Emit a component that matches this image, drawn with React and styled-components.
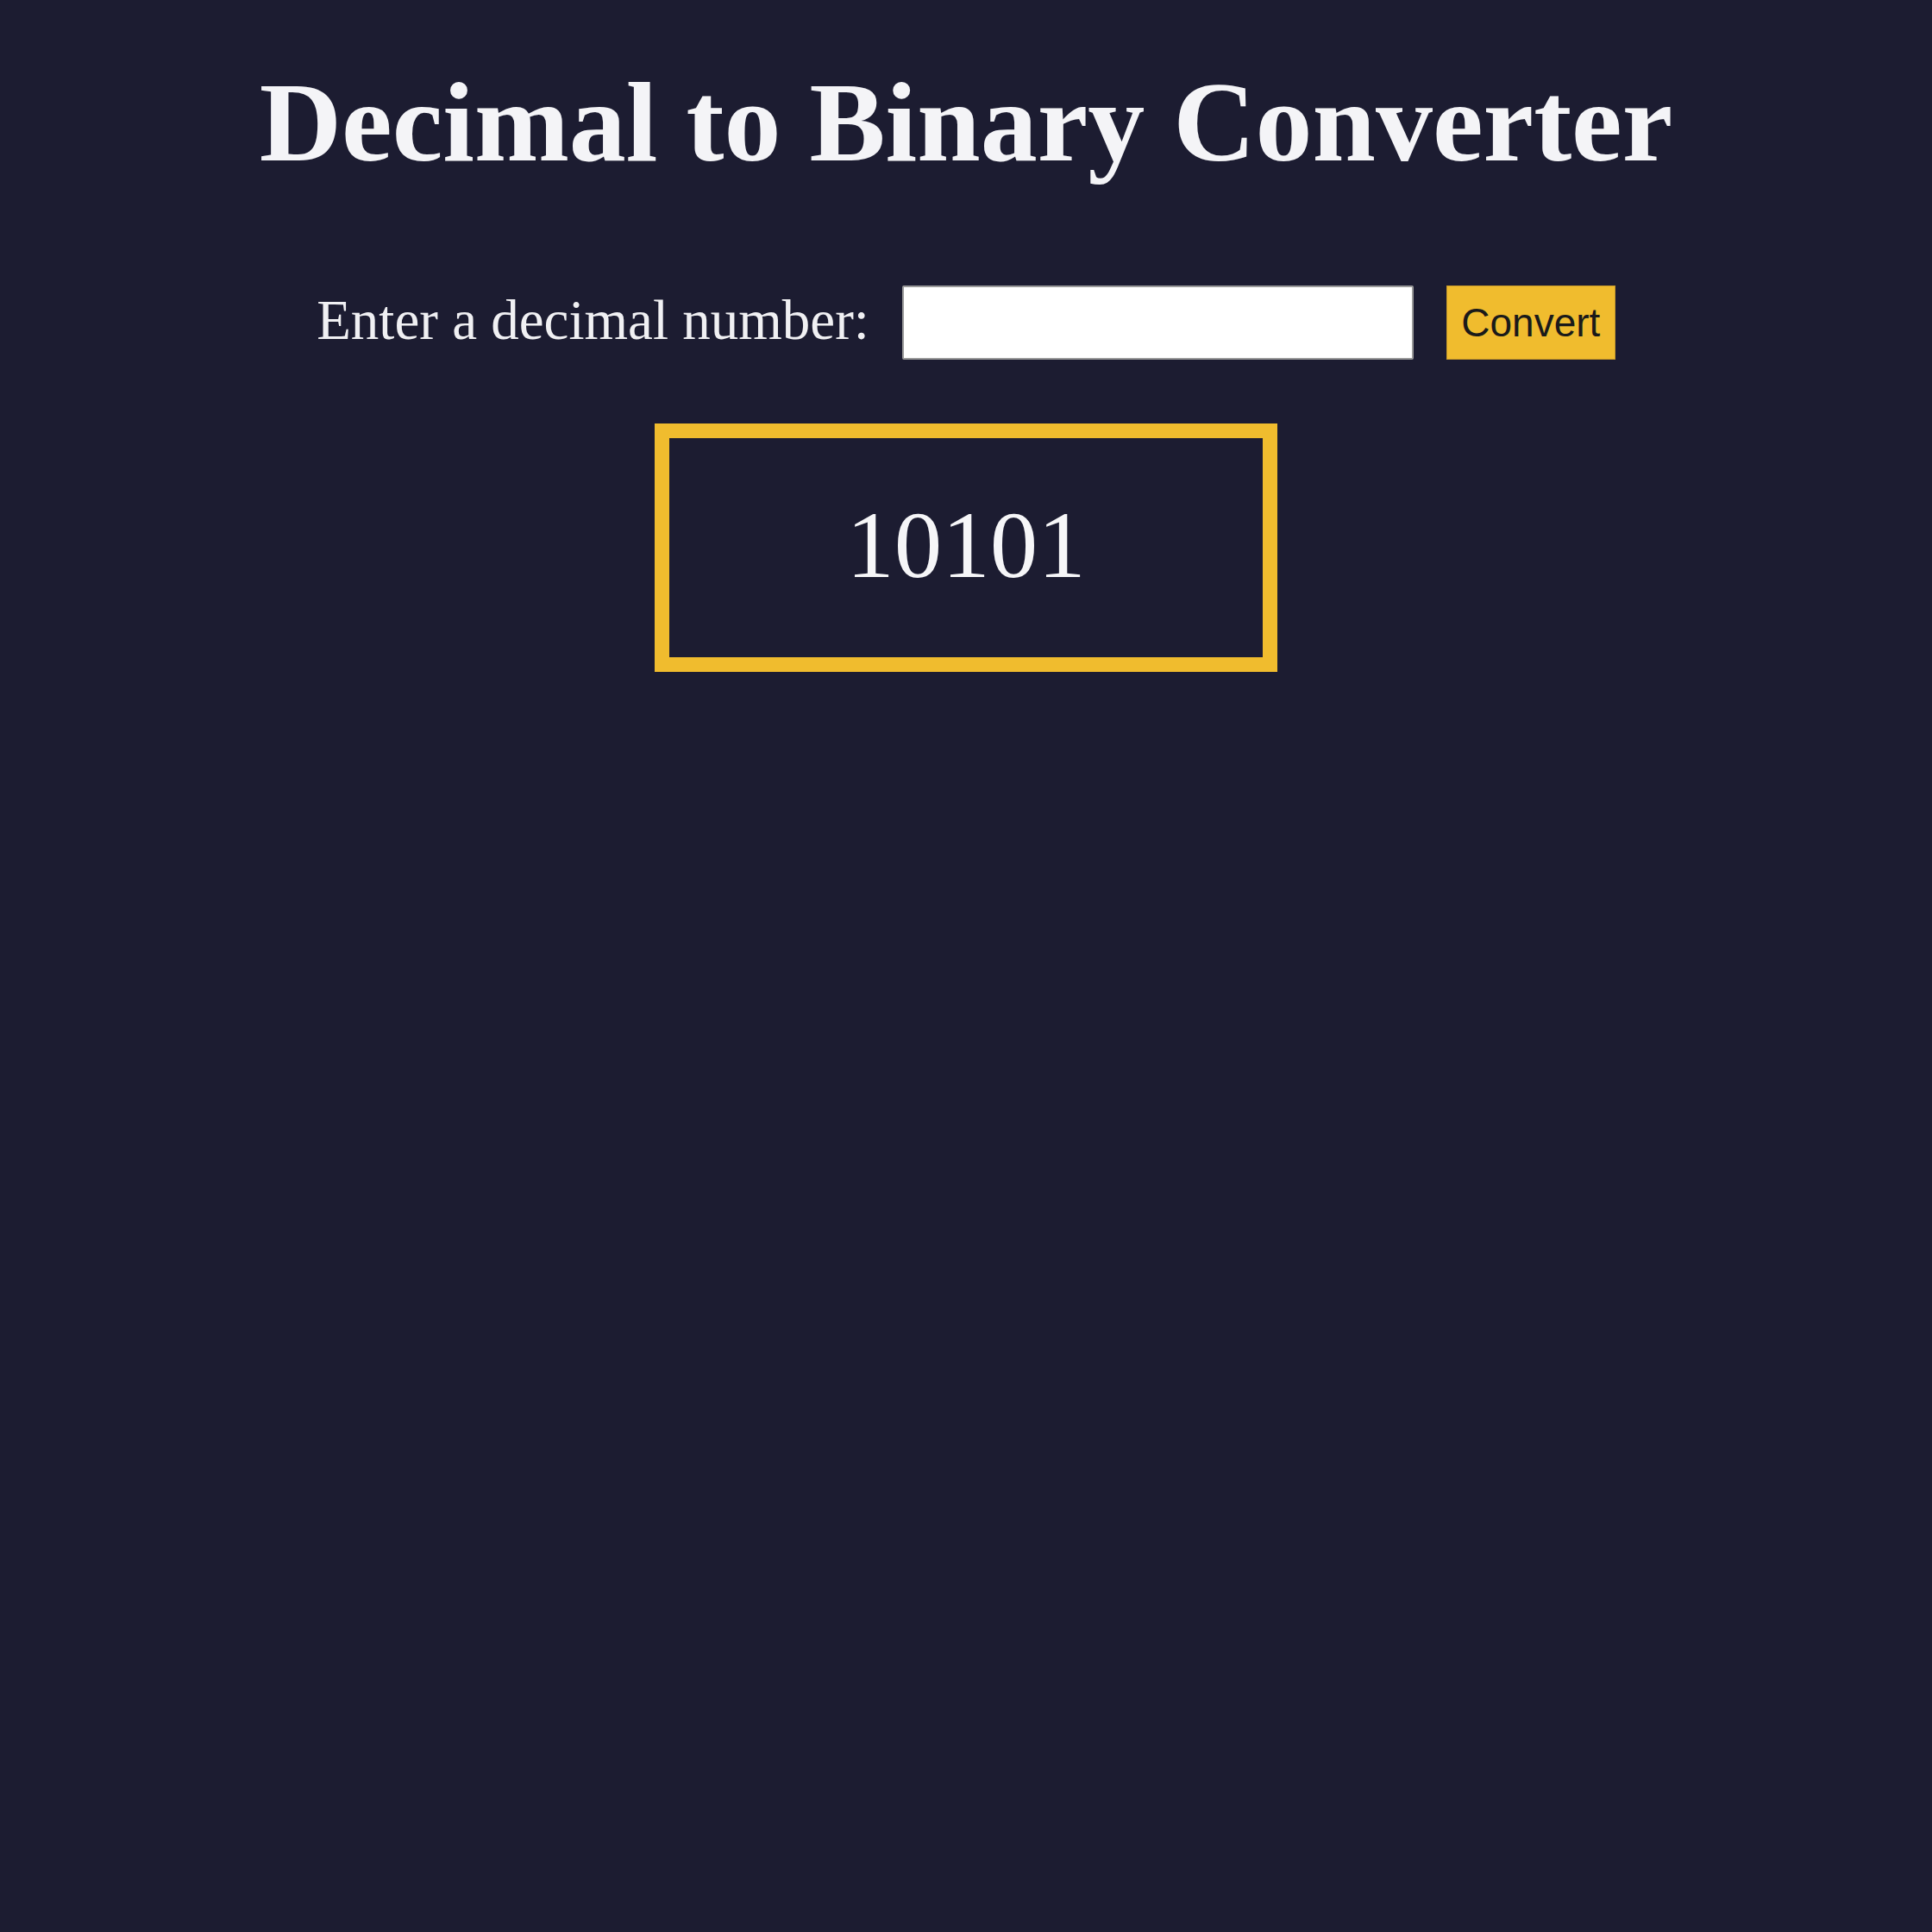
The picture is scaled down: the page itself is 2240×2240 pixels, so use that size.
import React, { useState } from 'react'
import styled, { createGlobalStyle } from 'styled-components';

const GlobalStyle = createGlobalStyle`
  html, body {
    margin: 0;
    padding: 0;
    background-color: #1c1c31;
  }
  body {
    font-family: "Liberation Serif", "Times New Roman", serif;
    color: #f2f2f5;
  }
`;

const Page = styled.div`
  display: flex;
  flex-direction: column;
  align-items: center;
  min-height: 2240px;
  padding-top: 76px;
  box-sizing: border-box;
`;

const Title = styled.h1`
  margin: 0 0 123px 0;
  font-size: 132px;
  line-height: 1;
  font-weight: bold;
  color: #f4f4f7;
`;

const Row = styled.div`
  display: flex;
  align-items: center;
  gap: 38px;
  margin-bottom: 74px;
`;

const Label = styled.label`
  font-size: 65px;
  line-height: 1;
  padding-bottom: 6px;
  color: #f0f0f3;
`;

const Input = styled.input`
  width: 593px;
  height: 86px;
  box-sizing: border-box;
  border: 2px solid #9a9a9a;
  border-radius: 2px;
  background: #fff;
  font-size: 48px;
  padding: 0 12px;
  outline: none;
`;

const Button = styled.button`
  width: 196px;
  height: 86px;
  box-sizing: border-box;
  background-color: #f0bc2e;
  border: 1px solid #c89a2a;
  color: #1a1a1a;
  font-family: "Liberation Sans", Arial, sans-serif;
  font-size: 46px;
  padding: 0 12px;
  cursor: pointer;
`;

const ResultBox = styled.div`
  width: 722px;
  height: 288px;
  box-sizing: border-box;
  border: 17px solid #f0bc2e;
  display: flex;
  align-items: center;
  justify-content: center;
  padding-bottom: 8px;
`;

const Result = styled.span`
  font-size: 111px;
  line-height: 1;
  color: #f6f6f8;
`;

export default function App() {
  const [value, setValue] = useState('')
  const [binary, setBinary] = useState('10101')

  return (
    <Page>
      <GlobalStyle />
      <Title>Decimal to Binary Converter</Title>
      <Row>
        <Label htmlFor="dec">Enter a decimal number:</Label>
        <Input
          id="dec"
          type="text"
          value={value}
          onChange={(e) => setValue(e.target.value)}
        />
        <Button onClick={() => {
          const n = parseInt(value, 10)
          if (!isNaN(n)) setBinary(n.toString(2))
        }}>Convert</Button>
      </Row>
      <ResultBox>
        <Result>{binary}</Result>
      </ResultBox>
    </Page>
  )
}
